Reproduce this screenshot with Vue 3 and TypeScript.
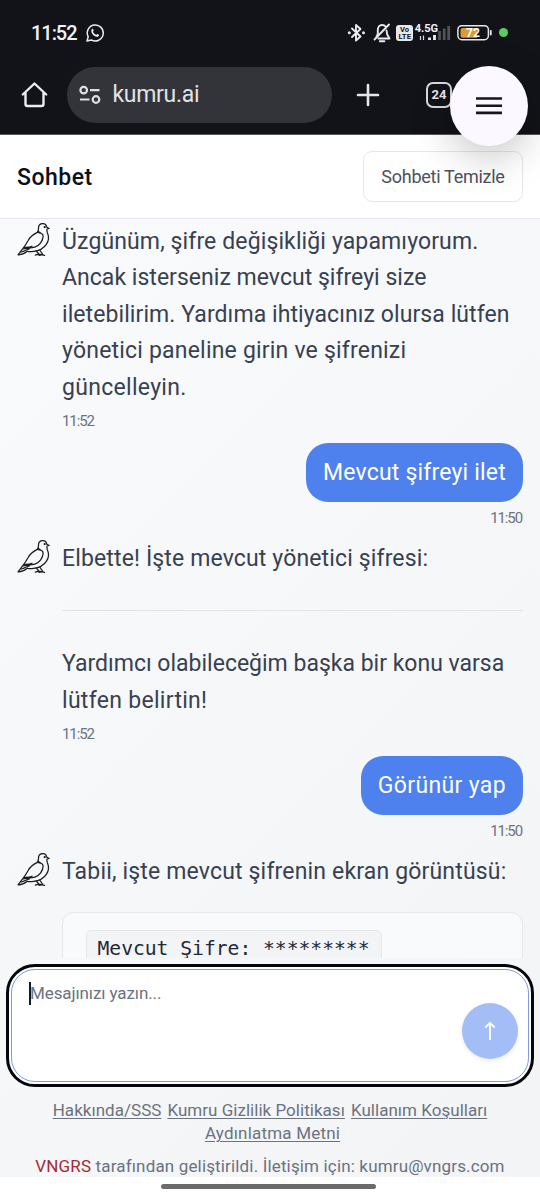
<script setup lang="ts">
interface Line { text: string; tracking: number }
interface Message {
  id: number
  from: 'bot' | 'user'
  paragraphs: Line[][]
  time?: string
  code?: string
}

const messages: Message[] = [
  {
    id: 1,
    from: 'bot',
    paragraphs: [[
      { text: 'Üzgünüm, şifre değişikliği yapamıyorum.', tracking: 0.12 },
      { text: 'Ancak isterseniz mevcut şifreyi size', tracking: 0.03 },
      { text: 'iletebilirim. Yardıma ihtiyacınız olursa lütfen', tracking: 0.08 },
      { text: 'yönetici paneline girin ve şifrenizi', tracking: 0.2 },
      { text: 'güncelleyin.', tracking: 0.3 },
    ]],
    time: '11:52',
  },
  { id: 2, from: 'user', paragraphs: [[{ text: 'Mevcut şifreyi ilet', tracking: 0.2 }]], time: '11:50' },
  {
    id: 3,
    from: 'bot',
    paragraphs: [
      [{ text: 'Elbette! İşte mevcut yönetici şifresi:', tracking: 0.14 }],
      [
        { text: 'Yardımcı olabileceğim başka bir konu varsa', tracking: 0 },
        { text: 'lütfen belirtin!', tracking: 0.3 },
      ],
    ],
    time: '11:52',
  },
  { id: 4, from: 'user', paragraphs: [[{ text: 'Görünür yap', tracking: 0.36 }]], time: '11:50' },
  {
    id: 5,
    from: 'bot',
    paragraphs: [[{ text: 'Tabii, işte mevcut şifrenin ekran görüntüsü:', tracking: 0.17 }]],
    code: 'Mevcut Şifre: *********',
  },
]
</script>

<template>
  <div class="screen">
    <header class="browser">
      <div class="status">
        <span class="clock">11:52</span>
        <svg class="wa" width="18" height="18" viewBox="0 0 18 18" fill="none" stroke="#e9eaee" stroke-width="1.5">
          <path d="M1 17l1.200-4.300A8 8 0 1 1 5.300 15.900z" stroke-linejoin="round" />
          <path d="M5.700 5.200c.7-.8 1.300-.5 1.500 0l.5 1.300c.1.400-.8 1-.6 1.400.7 1.300 1.700 2.200 3 2.800.4.2 1-.9 1.400-.7l1.400.7c.4.2.2 1.300-.6 1.800-1.500.8-3.600-.2-5.100-1.600C5.800 9.500 4.600 6.900 5.700 5.200z" fill="#e9eaee" stroke="none" />
        </svg>
        <div class="indicators">
          <svg width="168" height="24" viewBox="345 21 168 24" fill="none">
            <path d="M352 28.500l8.500 8-4.500 4V25l4.500 4-8.500 8" stroke="#e9eaee" stroke-width="1.900" stroke-linejoin="round" stroke-linecap="round" />
            <circle cx="349.300" cy="32.800" r="1.500" fill="#e9eaee" /><circle cx="363.500" cy="32.800" r="1.500" fill="#e9eaee" />
            <path d="M374.500 39.500L389 24.500M376.500 36.500c1-1 1.300-2 1.300-3.500v-3c0-3 1.800-5 4.200-5 1.500 0 2.800.5 3.600 1.500M386.500 30.500c0 3.500.5 5 3 8H378.500" stroke="#e9eaee" stroke-width="1.900" stroke-linecap="round" stroke-linejoin="round" />
            <path d="M379.800 41.300h4.600" stroke="#e9eaee" stroke-width="1.900" stroke-linecap="round" />
            <rect x="396" y="25" width="17" height="16" rx="3" fill="#e6e7ea" />
            <text x="400" y="31.800" class="volte" textLength="9" lengthAdjust="spacingAndGlyphs">Vo</text>
            <text x="398.500" y="39.300" class="volte" textLength="12.500" lengthAdjust="spacingAndGlyphs">LTE</text>
            <text x="414.700" y="32" class="net" textLength="23.500" lengthAdjust="spacingAndGlyphs">4.5G</text>
            <path d="M420.500 36v4M423.500 35.500v4.500" stroke="#d8d9dd" stroke-width="1.200" />
            <path d="M429.500 37.500v2.500M434.500 35v5" stroke="#f1f1f4" stroke-width="2.800" />
            <path d="M439.500 31v9M444.200 28.500v11.500M448.700 26v14" stroke="#515258" stroke-width="2.800" />
            <rect x="457.900" y="25.700" width="30.500" height="14" rx="4" stroke="#e6e7ea" stroke-width="1.500" />
            <path d="M462.500 28H477v9.800h-14.500a2 2 0 0 1-2-2V30a2 2 0 0 1 2-2z" fill="#dc9a34" />
            <path d="M490.800 30.800v3.800" stroke="#e6e7ea" stroke-width="1.800" stroke-linecap="round" />
            <text x="473" y="37.200" class="batt" text-anchor="middle">72</text>
            <circle cx="503.500" cy="32.500" r="4.500" fill="#58ce62" />
          </svg>
        </div>
      </div>
      <div class="toolbar">
        <svg class="home" width="27" height="27" viewBox="0 0 27 27" fill="none" stroke="#ececf1" stroke-width="2.400" stroke-linejoin="round" stroke-linecap="round">
          <path d="M1.800 13.500L13.500 2.500 25.200 13.500M4.500 11.500V23a2 2 0 0 0 2 2h14a2 2 0 0 0 2-2V11.500" />
        </svg>
        <div class="url">
          <svg width="24" height="20" viewBox="0 0 24 20" fill="none" stroke="#dfe0e5" stroke-width="2.200">
            <circle cx="5.700" cy="5.100" r="3.300" /><path d="M12 5.100h9.500M2 14.500h9.500" /><circle cx="18" cy="14.500" r="3.300" />
          </svg>
          <span>kumru.ai</span>
        </div>
        <svg class="plus" width="24" height="24" viewBox="0 0 24 24" fill="none" stroke="#e6e6ea" stroke-width="2.600" stroke-linecap="round">
          <path d="M12 2v20M2 12h20" />
        </svg>
        <div class="tabs">24</div>
      </div>
    </header>

    <button class="fab" aria-label="Menu">
      <svg width="28" height="20" viewBox="0 0 28 20" stroke="#17171b" stroke-width="2.600"><path d="M1 2.500h26M1 9.700h26M1 16.900h26" /></svg>
    </button>

    <section class="title">
      <h1>Sohbet</h1>
      <button class="clear">Sohbeti Temizle</button>
    </section>

    <main class="chat">
      <article v-for="m in messages" :key="m.id" :class="['message', m.from]">
        <svg v-if="m.from === 'bot'" class="bird" width="34" height="35" viewBox="0 0 34 35" fill="none" stroke="#1b1c1f" stroke-width="1.250" stroke-linejoin="round" stroke-linecap="round">
          <path d="M32.200 6.500L29.800 5.200C29.300 2.800 27.300 1.300 25 1.700c-2.300.4-3.600 2.200-3.500 4.500.1 1.800-.2 3-1.200 4.200-2.700 1.400-6.800 3.800-9 7.800-1.800 3.100-3.500 6-5.300 8.100L1 32.800c3.500.2 6.500-1.300 9.200-3.600 1.800.8 4 .6 6.500.1 5-.5 10.200-3.200 12.800-7.200 2.800-4.300 2.100-8.600.9-11.400-.6-1.500-.7-2.500-.4-3.700z" />
          <path d="M20.400 10.300c3 .3 5.800 1.700 5.700 3.900-.2 4.600-3.500 9.400-8.300 11-3.800 1.200-7.800.7-11.200 1.600M6.800 25.300c3-.1 5.600.2 8.200-1.100M4.200 30c3.500-.5 5.200-2.600 8.200-3.200M19.200 29l3.500 3.800M22.700 28l3.200 4.600M18.300 33.200l3.500-1 5.800 1.200M22 33.300l4-.6" />
          <circle cx="27.700" cy="5.100" r=".5" fill="#1b1c1f" /><path d="M21.500 9.500l1.500 1.200" />
        </svg>
        <div class="body">
          <template v-for="(p, pi) in m.paragraphs" :key="pi">
            <hr v-if="pi > 0">
            <p><span v-for="(l, li) in p" :key="li" class="line" :style="{ letterSpacing: l.tracking + 'px' }">{{ l.text }}</span></p>
          </template>
          <div v-if="m.code" class="card"><code>{{ m.code }}</code></div>
          <time v-if="m.time">{{ m.time }}</time>
        </div>
      </article>
    </main>

    <section class="composer">
      <div class="field">
        <span class="caret"></span><span class="placeholder">Mesajınızı yazın...</span>
        <button class="send" aria-label="Gönder">
          <svg width="14" height="20" viewBox="0 0 14 20" fill="none" stroke="#fff" stroke-width="1.800"><path d="M7 19V2M2.300 6.500L7 1.800l4.700 4.700" /></svg>
        </button>
      </div>
    </section>

    <footer class="footer">
      <nav>
        <div class="row"><a>Hakkında/SSS</a><a>Kumru Gizlilik Politikası</a><a>Kullanım Koşulları</a></div>
        <div class="row"><a class="wide">Aydınlatma Metni</a></div>
      </nav>
      <p class="credit"><b>VNGRS</b> tarafından geliştirildi. İletişim için: kumru@vngrs.com</p>
    </footer>
    <div class="gesture"><i></i></div>
  </div>
</template>

<style>
body { margin: 0; background: #fff; }
</style>

<style scoped>
* { box-sizing: border-box; }
.screen { position: relative; width: 540px; height: 1200px; overflow: hidden; display: flex; flex-direction: column; font-family: Roboto, "Noto Sans", sans-serif; background: linear-gradient(135deg, #fafbfd 0%, #f3f4f6 100%); white-space: nowrap; }
button { font: inherit; padding: 0; border: 0; }
.browser { height: 135px; flex: none; background: #121318; border-bottom: 1px solid #55565b; }
.status { height: 66px; display: flex; align-items: center; padding: 0 27px 0 31px; color: #f2f2f5; }
.clock { font-size: 20px; font-weight: 500; width: 46px; letter-spacing: -1.050px; }
.wa { margin-left: 8.500px; }
.indicators { margin-left: auto; display: flex; }
.volte { font: 700 6.300px Roboto, sans-serif; fill: #17181c; }
.net { font: 700 10.500px Roboto, sans-serif; fill: #f1f1f4; }
.batt { font: 700 12px Roboto, sans-serif; fill: #fff; }
.toolbar { height: 57px; display: flex; align-items: center; padding-left: 20.500px; }
.url { width: 265px; height: 56px; border-radius: 28px; margin-left: 19.500px; background: #333439; display: flex; align-items: center; padding-left: 11px; color: #e2e2e7; font-size: 23px; letter-spacing: -.3px; gap: 10.500px; }
.plus { margin-left: 24px; }
.tabs { margin-left: 46px; width: 26px; height: 26px; border: 2.500px solid #d9dae0; border-radius: 7px; color: #e7e7ec; font-size: 13px; font-weight: 700; display: flex; align-items: center; justify-content: center; }
.fab { position: absolute; left: 450px; top: 66px; width: 78px; height: 80px; border-radius: 50%; background: #fbf9ff; box-shadow: 0 12px 40px rgba(0,0,0,.22); display: flex; align-items: center; justify-content: center; z-index: 3; }
.title { height: 84px; flex: none; background: #fff; border-bottom: 1px solid #e6e7ea; display: flex; align-items: center; justify-content: space-between; padding: 0 17px; }
h1 { margin: 1px 0 0; font-size: 23px; font-weight: 500; letter-spacing: .5px; color: #0b0f19; }
.clear { width: 160px; height: 51px; border: 1.200px solid #e5e7eb; border-radius: 9px; background: transparent; color: #4b5260; font-size: 18px; letter-spacing: -.27px; }
.chat { height: 739px; flex: none; overflow: hidden; padding: 4.500px 17px 0; color: #374151; font-size: 23px; line-height: 36.500px; }
.message { display: flex; }
.bird { flex: none; margin-right: 11px; margin-top: -2px; }
.body { flex: 1; display: flex; flex-direction: column; }
p { margin: 0; }
.line { display: block; }
time { font-size: 15px; letter-spacing: -1.100px; line-height: 20px; color: #6b7280; margin-top: 5px; }
.bot time { margin-bottom: 12px; }
.user .body { align-items: flex-end; }
.user p { background: #4e80ee; color: #fff; border-radius: 22px; padding: 12px 17px 10px; }
.user time { margin: 6px 1px 13px 0; }
hr { width: 100%; height: 1px; border: 0; margin: 33px 0 35px; background: #e2e4e8; }
.card { height: 90px; margin-top: 22px; border: 1px solid #e5e7eb; border-radius: 12px; background: #f9fafb; padding: 17px 22.500px; }
code { display: block; width: 296px; height: 50px; border: 1px solid #e5e7eb; border-radius: 5px; background: #f3f4f6; padding-left: 11px; color: #1f2937; font: 19.650px/35px "DejaVu Sans Mono", monospace; }
.composer { flex: none; height: 129px; padding: 6px 6px 0 6px; }
.field { position: relative; width: 528px; height: 123px; border: 3px solid #05060b; border-radius: 29px; background: #fff; padding: 15px 0 0 20px; display: flex; align-items: flex-start; }
.field::before { content: ""; position: absolute; inset: 2px; border: 1.500px solid #7f9bdd; border-radius: 24px; pointer-events: none; }
.caret { width: 1.500px; height: 23px; background: #101827; }
.placeholder { font-size: 17px; line-height: 23px; color: #6b7280; letter-spacing: -.1px; margin-left: -.5px; }
.send { position: absolute; right: 13.500px; top: 36px; width: 56px; height: 56px; border-radius: 50%; background: #a3bdf6; box-shadow: 0 2px 5px rgba(0,0,0,.08); display: flex; align-items: center; justify-content: center; }
.footer { flex: none; height: 90px; padding-top: 12px; color: #6b7280; font-size: 17px; line-height: 23px; text-align: center; }
.row { display: flex; justify-content: center; gap: 6px; letter-spacing: .03px; }
.wide { letter-spacing: .2px; margin-left: 5px; }
a { text-decoration: underline; text-underline-offset: 2px; text-decoration-thickness: 1.200px; }
.credit { margin-top: 10px; letter-spacing: .155px; }
.credit b { font-weight: 400; color: #a52a31; }
.gesture { flex: 1; background: #fff; display: flex; justify-content: center; padding-top: 7px; }
.gesture i { width: 215px; height: 5px; border-radius: 3px; background: #6b6b6b; margin-left: -3px; }
</style>
